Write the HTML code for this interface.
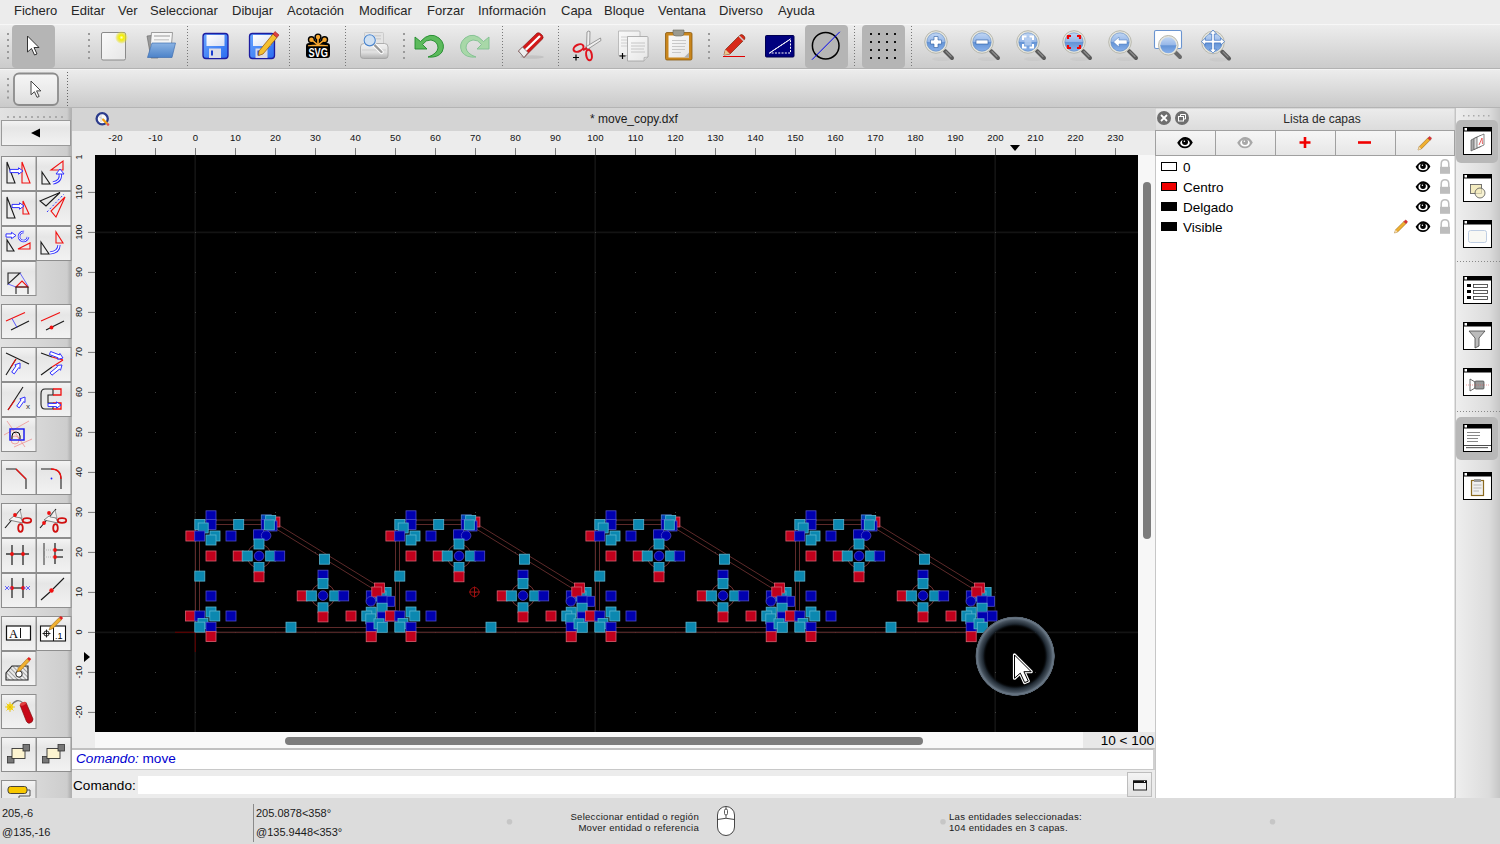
<!DOCTYPE html>
<html><head><meta charset="utf-8">
<style>
*{box-sizing:border-box;margin:0;padding:0}
html,body{width:1500px;height:844px;overflow:hidden;background:#ececec;font-family:"Liberation Sans",sans-serif;color:#000}
.a{position:absolute}
svg{display:block}
#menubar{left:0;top:0;width:1500px;height:24px;background:#ececec}
#menubar span{position:absolute;top:3px;font-size:13px;color:#262626;white-space:nowrap}
#tb1{left:0;top:24px;width:1500px;height:45px;background:linear-gradient(#ededed,#cbcbcb);border-top:1px solid #f7f7f7;border-bottom:1px solid #b2b2b2}
#tb2{left:0;top:69px;width:1500px;height:39px;background:linear-gradient(#ececec,#cacaca);border-top:1px solid #f4f4f4;border-bottom:1px solid #b4b4b4}
#left{left:0;top:108px;width:72px;height:690px;background:linear-gradient(90deg,#e2e2e2 0,#d8d8d8 36px,#cdcdcd 67px,#b6b6b6 70px,#b0b0b0 72px)}
#tabbar{left:72px;top:108px;width:1083px;height:23px;background:#d4d4d4}
#title{position:absolute;left:518px;top:4px;font-size:12px;color:#1a1a1a}
#hruler{left:72px;top:131px;width:1083px;height:24px;background:#ececec}
.rl{position:absolute;top:1px;width:40px;text-align:center;font-size:9.6px;letter-spacing:0.15px;color:#111}
#vruler{left:72px;top:155px;width:23px;height:577px;background:#ececec;overflow:hidden}
.vl{position:absolute;left:-13.5px;width:40px;height:12px;margin-top:-6px;text-align:center;font-size:9px;line-height:12px;color:#111;transform:rotate(-90deg)}
#canvas{left:95px;top:155px;width:1043px;height:577px;background:#000;overflow:hidden}
#vscroll{left:1138px;top:155px;width:17px;height:577px;background:#f7f7f7}
#vthumb{left:5px;top:27px;width:8px;height:357px;border-radius:4px;background:#7c7c7c}
#hscroll{left:95px;top:732px;width:988px;height:16px;background:#f8f8f8}
#hthumb{left:190px;top:5px;width:638px;height:8px;border-radius:4px;background:#7c7c7c}
#zoomlbl{left:1083px;top:732px;width:72px;height:16px;background:#e8e8e8;font-size:13.6px;text-align:right;padding-right:1px;line-height:17px}
#corner{left:72px;top:732px;width:23px;height:16px;background:#ececec}
#hist{left:72px;top:748px;width:1083px;height:22px;background:#fff;border-top:2px solid #c0c0c0;border-bottom:1px solid #c8c8c8;border-right:2px solid #d0d0d0;font-size:13.6px;color:#0000d0;padding-left:4px;line-height:18px}
#hist span{font-style:italic}
#cmdrow{left:72px;top:770px;width:1083px;height:28px;background:#ececec}
#cmdlbl{position:absolute;left:1px;top:7.5px;font-size:13.6px}
#cmdin{left:66px;top:6px;width:990px;height:18px;background:#fff}
#cmdbtn{left:1055px;top:2px;width:25px;height:25px;border:1px solid #bdbdbd;background:linear-gradient(#f4f4f4,#e0e0e0)}
#status{left:0;top:0;width:1500px;height:844px;background:transparent;pointer-events:none}
#statusbg{left:0;top:798px;width:1500px;height:46px;background:#dcdcdc}
#layers{left:1155px;top:108px;width:300px;height:690px;background:#fff;border-left:2px solid #c8c8c8}
#dock{left:1455px;top:108px;width:45px;height:690px;background:linear-gradient(90deg,#eeeeee,#dcdcdc 75%,#c6c6c6);border-left:1px solid #c4c4c4}
.st{position:absolute;font-size:11px;color:#1a1a1a;white-space:nowrap}
.st2{position:absolute;font-size:9.6px;letter-spacing:0.25px;color:#1a1a1a;white-space:nowrap}

</style></head><body>
<div id="menubar" class="a"><span style="left:14px">Fichero</span><span style="left:71px">Editar</span><span style="left:118px">Ver</span><span style="left:150px">Seleccionar</span><span style="left:232px">Dibujar</span><span style="left:287px">Acotación</span><span style="left:359px">Modificar</span><span style="left:427px">Forzar</span><span style="left:478px">Información</span><span style="left:561px">Capa</span><span style="left:604px">Bloque</span><span style="left:658px">Ventana</span><span style="left:719px">Diverso</span><span style="left:778px">Ayuda</span></div>
<div id="tb1" class="a"><svg width="1500" height="46" viewBox="0 23 1500 46" style="position:absolute;left:0;top:-2px"><defs>
<linearGradient id="lensg" x1="0" y1="0" x2="0" y2="1"><stop offset="0" stop-color="#c0d6f4"/><stop offset="0.47" stop-color="#98b8e8"/><stop offset="0.53" stop-color="#6494d6"/><stop offset="1" stop-color="#88b0ea"/></linearGradient>
<linearGradient id="flopg" x1="0" y1="0" x2="1" y2="1"><stop offset="0" stop-color="#6aa6ff"/><stop offset="1" stop-color="#2a6cf0"/></linearGradient>
<linearGradient id="labg" x1="0" y1="0" x2="1" y2="1"><stop offset="0" stop-color="#fff"/><stop offset="1" stop-color="#d8e0f4"/></linearGradient>
<linearGradient id="paperg" x1="0" y1="0" x2="1" y2="1"><stop offset="0" stop-color="#fafafa"/><stop offset="1" stop-color="#e6e6e6"/></linearGradient>
<linearGradient id="foldg" x1="0" y1="0" x2="0" y2="1"><stop offset="0" stop-color="#8cb4e4"/><stop offset="1" stop-color="#4c82c8"/></linearGradient>
<linearGradient id="btng" x1="0" y1="0" x2="0" y2="1"><stop offset="0" stop-color="#f6f6f6"/><stop offset="0.5" stop-color="#ececec"/><stop offset="1" stop-color="#dedede"/></linearGradient>
<radialGradient id="glow"><stop offset="0" stop-color="#ffffc0"/><stop offset="0.35" stop-color="#f4f000"/><stop offset="0.7" stop-color="#e8e020" stop-opacity="0.6"/><stop offset="1" stop-color="#e8e020" stop-opacity="0"/></radialGradient>
</defs><rect x="7" y="33" width="2" height="2" fill="#9a9a9a"/><rect x="7" y="39" width="2" height="2" fill="#9a9a9a"/><rect x="7" y="45" width="2" height="2" fill="#9a9a9a"/><rect x="7" y="51" width="2" height="2" fill="#9a9a9a"/><rect x="7" y="57" width="2" height="2" fill="#9a9a9a"/><rect x="12" y="25" width="43" height="43" rx="4" fill="#b5b5b5"/><path d="M0,0 L0,16 L4,12.5 L7,19 L9.5,18 L6.5,11.5 L11.5,11.5 Z" transform="translate(27.5,36) scale(1.0)" fill="#fff" stroke="#333" stroke-width="1.0" stroke-linejoin="round"/><rect x="88" y="33" width="2" height="2" fill="#9a9a9a"/><rect x="88" y="39" width="2" height="2" fill="#9a9a9a"/><rect x="88" y="45" width="2" height="2" fill="#9a9a9a"/><rect x="88" y="51" width="2" height="2" fill="#9a9a9a"/><rect x="88" y="57" width="2" height="2" fill="#9a9a9a"/><rect x="101.5" y="32.5" width="24" height="27.5" rx="1.5" fill="url(#paperg)" stroke="#8a8a8a" stroke-width="1"/><circle cx="121.5" cy="37.5" r="6.5" fill="url(#glow)"/><path d="M147,36 L156,35 L158,58 L151,58 Z" fill="#9a9a9a" stroke="#6e6e6e" stroke-width="0.7"/><path d="M151.5,32.5 L172.5,32.5 L171,50 L150,50 Z" fill="#f6f6f6" stroke="#7a7a7a" stroke-width="0.7"/><rect x="154" y="35" width="16" height="2" fill="#c8c8c8"/><rect x="154" y="39" width="15" height="1.5" fill="#cfcfcf"/><path d="M152,43 L175.5,43 L172,57.5 L147.5,57.5 Z" fill="url(#foldg)" stroke="#4070b0" stroke-width="0.7"/><line x1="187.5" y1="26" x2="187.5" y2="67" stroke="#777" stroke-width="1" stroke-dasharray="1 2"/><rect x="203" y="33.5" width="25" height="25" rx="3" fill="url(#flopg)" stroke="#1c1ca0" stroke-width="1.3"/><rect x="206.5" y="35.0" width="18" height="11" fill="url(#labg)"/><rect x="209" y="48.5" width="12" height="9.5" fill="#dcdce6"/><rect x="211" y="50.5" width="2" height="5" fill="#1a3cd0"/><rect x="249.5" y="33.5" width="25" height="25" rx="3" fill="url(#flopg)" stroke="#1c1ca0" stroke-width="1.3"/><rect x="253.0" y="35.0" width="18" height="11" fill="url(#labg)"/><rect x="255.5" y="48.5" width="12" height="9.5" fill="#dcdce6"/><rect x="257.5" y="50.5" width="2" height="5" fill="#1a3cd0"/><path d="M259,51 L273,34 L277,37.5 L263,54 L258.5,55.5 Z" fill="#f4c030" stroke="#a06010" stroke-width="0.8"/><path d="M273,34 L275,31.5 L279,35 L277,37.5 Z" fill="#e04040" stroke="#a02020" stroke-width="0.6"/><line x1="289.5" y1="26" x2="289.5" y2="67" stroke="#777" stroke-width="1" stroke-dasharray="1 2"/><g stroke="#000" stroke-width="4.2" stroke-linecap="round"><line x1="318" y1="45" x2="318" y2="37"/><line x1="318" y1="45" x2="311.4" y2="39.7"/><line x1="318" y1="45" x2="324.6" y2="39.7"/></g><g fill="#000"><circle cx="318" cy="37" r="3.6"/><circle cx="311.4" cy="39.7" r="3.6"/><circle cx="324.6" cy="39.7" r="3.6"/></g><rect x="306" y="43" width="24" height="15" rx="3.2" fill="#000"/><g stroke="#f8a830" stroke-width="1.6" stroke-linecap="round"><line x1="318" y1="45" x2="318" y2="37.5"/><line x1="318" y1="45" x2="312" y2="40.2"/><line x1="318" y1="45" x2="324" y2="40.2"/></g><g fill="#f8a830"><circle cx="318" cy="37" r="2.2"/><circle cx="311.4" cy="39.7" r="2.2"/><circle cx="324.6" cy="39.7" r="2.2"/></g><path d="M308,45.3 Q318,43.5 328,45.3 L328,46.3 L308,46.3 Z" fill="#f8a830"/><text x="0" y="0" transform="translate(318.2,56.5) scale(0.74,1)" font-family="Liberation Sans" font-weight="bold" font-size="12.5" fill="#fff" text-anchor="middle">SVG</text><line x1="345.5" y1="26" x2="345.5" y2="67" stroke="#777" stroke-width="1" stroke-dasharray="1 2"/><defs><linearGradient id="prg" x1="0" y1="0" x2="0" y2="1"><stop offset="0" stop-color="#f2f2f2"/><stop offset="0.6" stop-color="#dedede"/><stop offset="1" stop-color="#b0b0b0"/></linearGradient></defs><rect x="364.5" y="32.5" width="19" height="13" rx="1" fill="#e4e4e4" stroke="#c4c4c4" stroke-width="0.8"/><rect x="367" y="35" width="14" height="1.5" fill="#d0d0d0"/><rect x="367" y="38" width="14" height="1.5" fill="#d0d0d0"/><path d="M360.5,47 Q360.5,43.5 364,43.5 L384.5,43.5 Q388,43.5 388,47 L388,56 Q388,58.5 385,58.5 L363.5,58.5 Q360.5,58.5 360.5,56 Z" fill="url(#prg)" stroke="#a0a0a0" stroke-width="0.8"/><path d="M362,50 H386" stroke="#c8c8c8" stroke-width="0.8"/><line x1="374.5" y1="45" x2="381.5" y2="52" stroke="#fff" stroke-width="4.2" stroke-linecap="round"/><line x1="374.5" y1="45" x2="381.5" y2="52" stroke="#9a9a9a" stroke-width="2.4" stroke-linecap="round"/><circle cx="369.7" cy="40.3" r="6.6" fill="#f4f4f4"/><circle cx="369.7" cy="40.3" r="5.6" fill="#cfe0f2" stroke="#4a84cc" stroke-width="1.1"/><rect x="403" y="33" width="2" height="2" fill="#9a9a9a"/><rect x="403" y="39" width="2" height="2" fill="#9a9a9a"/><rect x="403" y="45" width="2" height="2" fill="#9a9a9a"/><rect x="403" y="51" width="2" height="2" fill="#9a9a9a"/><rect x="403" y="57" width="2" height="2" fill="#9a9a9a"/><path d="M415,37 L415,49 L427,49 L422.5,44.5 Q426,39.5 431,40 Q438,41.5 438,48 Q437,54 428,57 Q438,58 442,52 Q446,44 439,38 Q430,31 420.5,41.5 Z" fill="#5cba5c" stroke="#1f8a2a" stroke-width="0.9"/><path d="M489,37 L489,49 L477,49 L481.5,44.5 Q478,39.5 473,40 Q466,41.5 466,48 Q467,54 476,57 Q466,58 462,52 Q458,44 465,38 Q474,31 483.5,41.5 Z" fill="#a8d8a8" stroke="#80c090" stroke-width="0.9"/><line x1="502.5" y1="26" x2="502.5" y2="67" stroke="#777" stroke-width="1" stroke-dasharray="1 2"/><ellipse cx="532" cy="57" rx="12" ry="1.8" fill="#000" opacity="0.08"/><path d="M518.5,51 L537,33 Q539,32 541,34 L542.5,35.5 Q544,37.5 542,39.5 L524,57.5 Z" fill="#d41818" stroke="#7a1010" stroke-width="0.6"/><path d="M521.5,54 L540,36" stroke="#fff" stroke-width="2.3"/><path d="M518.5,51 L522.5,47 L528,52.5 L524,57.5 Z" fill="#eee" stroke="#666" stroke-width="0.7"/><line x1="558.5" y1="26" x2="558.5" y2="67" stroke="#777" stroke-width="1" stroke-dasharray="1 2"/><path d="M586.5,50 L587,32 Q588,30.5 590,31.5 L589.5,50 Z" fill="#f0f0f0" stroke="#777" stroke-width="0.7"/><path d="M585.5,47 L600.5,38 L601,40.5 L588,49 Z" fill="#f0f0f0" stroke="#777" stroke-width="0.7"/><ellipse cx="578.5" cy="48" rx="5.3" ry="3.3" transform="rotate(-25 578.5 48)" fill="none" stroke="#e0141e" stroke-width="2"/><ellipse cx="589" cy="55" rx="2.8" ry="5.3" transform="rotate(-10 589 55)" fill="none" stroke="#e0141e" stroke-width="2"/><path d="M583,50 L587,48" stroke="#e0141e" stroke-width="2"/><path d="M576,54.5 V60.5 M573,57.5 H579" stroke="#000" stroke-width="1.2"/><path d="M618.5,31 H639 Q640,31 640,32 V55.5 H618.5 Z" fill="url(#paperg)" stroke="#b0b0b0" stroke-width="0.8"/><g stroke="#d0d0d0" stroke-width="1"><line x1="621" y1="37" x2="630" y2="37"/><line x1="621" y1="40" x2="630" y2="40"/><line x1="621" y1="43" x2="630" y2="43"/><line x1="621" y1="46" x2="630" y2="46"/></g><path d="M627.5,36.5 H647 Q648,36.5 648,37.5 V57 L644,61 H627.5 Z" fill="url(#paperg)" stroke="#a0a0a0" stroke-width="0.8"/><path d="M644,61 L644,57.5 L648,57" fill="#d8d8d8" stroke="#a0a0a0" stroke-width="0.6"/><g stroke="#c6c6c6" stroke-width="1"><line x1="631" y1="43" x2="645" y2="43"/><line x1="631" y1="46" x2="645" y2="46"/><line x1="631" y1="49" x2="644" y2="49"/><line x1="631" y1="52" x2="645" y2="52"/></g><path d="M622.5,53 V59 M619.5,56 H625.5" stroke="#000" stroke-width="1.2"/><rect x="665.5" y="32.5" width="26.5" height="27.5" rx="1.5" fill="#c8851c" stroke="#8a5a10" stroke-width="0.8"/><rect x="668.5" y="35.5" width="20.5" height="22" fill="url(#paperg)"/><path d="M684,57.5 L689,52.5 L689,57.5 Z" fill="#b0b0b0"/><path d="M673,30 H684 V33 Q684,36 681,36 H676 Q673,36 673,33 Z" fill="#9a9a90" stroke="#6a6a60" stroke-width="0.6"/><g stroke="#c8c8c8" stroke-width="1"><line x1="672" y1="40.5" x2="686" y2="40.5"/><line x1="672" y1="43.5" x2="686" y2="43.5"/><line x1="672" y1="46.5" x2="685" y2="46.5"/><line x1="672" y1="49.5" x2="685" y2="49.5"/><line x1="672" y1="52.5" x2="681" y2="52.5"/></g><rect x="708" y="33" width="2" height="2" fill="#9a9a9a"/><rect x="708" y="39" width="2" height="2" fill="#9a9a9a"/><rect x="708" y="45" width="2" height="2" fill="#9a9a9a"/><rect x="708" y="51" width="2" height="2" fill="#9a9a9a"/><rect x="708" y="57" width="2" height="2" fill="#9a9a9a"/><path d="M724,55 L725.5,49.5 L739.5,35.5 Q741.5,33.5 743.5,35.5 L744,36 Q746,38 744,40 L730,54 Z" fill="#d82a1a" stroke="#7a2a10" stroke-width="0.7"/><path d="M724,55 L725.5,49.5 L730,54 Z" fill="#e8c890"/><path d="M739,36 L744,41" stroke="#ccc" stroke-width="1.5"/><line x1="723" y1="56.5" x2="745" y2="56.5" stroke="#e00000" stroke-width="1"/><rect x="765.5" y="35.5" width="28.5" height="21.5" rx="1" fill="#00007e" stroke="#000050" stroke-width="1"/><path d="M769.5,53 L790.5,39 L790.5,53 Z" fill="none" stroke="#fff" stroke-width="1" stroke-dasharray="2 1.3"/><line x1="769.5" y1="53" x2="790.5" y2="39" stroke="#fff" stroke-width="1"/><rect x="805" y="25" width="43" height="43" rx="4" fill="#b5b5b5"/><circle cx="825.7" cy="45.7" r="13.3" fill="none" stroke="#000" stroke-width="1.5"/><line x1="812" y1="59.7" x2="839.8" y2="31.8" stroke="#0000f0" stroke-width="1"/><line x1="854.5" y1="26" x2="854.5" y2="67" stroke="#777" stroke-width="1" stroke-dasharray="1 2"/><rect x="862" y="25" width="43" height="43" rx="4" fill="#b5b5b5"/><rect x="870" y="33" width="2" height="2" fill="#111"/><rect x="870" y="41" width="2" height="2" fill="#111"/><rect x="870" y="49" width="2" height="2" fill="#111"/><rect x="870" y="57" width="2" height="2" fill="#111"/><rect x="878" y="33" width="2" height="2" fill="#111"/><rect x="878" y="41" width="2" height="2" fill="#111"/><rect x="878" y="49" width="2" height="2" fill="#111"/><rect x="878" y="57" width="2" height="2" fill="#111"/><rect x="886" y="33" width="2" height="2" fill="#111"/><rect x="886" y="41" width="2" height="2" fill="#111"/><rect x="886" y="49" width="2" height="2" fill="#111"/><rect x="886" y="57" width="2" height="2" fill="#111"/><rect x="894" y="33" width="2" height="2" fill="#111"/><rect x="894" y="41" width="2" height="2" fill="#111"/><rect x="894" y="49" width="2" height="2" fill="#111"/><rect x="894" y="57" width="2" height="2" fill="#111"/><line x1="911.5" y1="26" x2="911.5" y2="67" stroke="#777" stroke-width="1" stroke-dasharray="1 2"/><ellipse cx="942" cy="59" rx="10" ry="2" fill="#000" opacity="0.03"/><path d="M945,51 L952,58" stroke="#5a5a5a" stroke-width="4" stroke-linecap="round"/><path d="M946,51.5 L951,56.5" stroke="#8a8a8a" stroke-width="1.2" stroke-linecap="round"/><circle cx="936" cy="42" r="11.3" fill="#e6e6de" stroke="#b8b8ae" stroke-width="1"/><circle cx="936" cy="42" r="9.2" fill="url(#lensg)" stroke="#5a86c0" stroke-width="0.6"/><path d="M934,36.5 h4 v3.5 h3.5 v4 h-3.5 v3.5 h-4 v-3.5 h-3.5 v-4 h3.5 z" fill="#fff" stroke="#2a5aa0" stroke-width="0.6"/><ellipse cx="988" cy="59" rx="10" ry="2" fill="#000" opacity="0.03"/><path d="M991,51 L998,58" stroke="#5a5a5a" stroke-width="4" stroke-linecap="round"/><path d="M992,51.5 L997,56.5" stroke="#8a8a8a" stroke-width="1.2" stroke-linecap="round"/><circle cx="982" cy="42" r="11.3" fill="#e6e6de" stroke="#b8b8ae" stroke-width="1"/><circle cx="982" cy="42" r="9.2" fill="url(#lensg)" stroke="#5a86c0" stroke-width="0.6"/><rect x="976" y="40" width="12" height="4" fill="#fff" stroke="#2a5aa0" stroke-width="0.6"/><ellipse cx="1034" cy="59" rx="10" ry="2" fill="#000" opacity="0.03"/><path d="M1037,51 L1044,58" stroke="#5a5a5a" stroke-width="4" stroke-linecap="round"/><path d="M1038,51.5 L1043,56.5" stroke="#8a8a8a" stroke-width="1.2" stroke-linecap="round"/><circle cx="1028" cy="42" r="11.3" fill="#e6e6de" stroke="#b8b8ae" stroke-width="1"/><circle cx="1028" cy="42" r="9.2" fill="url(#lensg)" stroke="#5a86c0" stroke-width="0.6"/><rect x="1024.5" y="38" width="7" height="7.5" fill="#b8d0f0" opacity="0.8"/><path d="M1023,40 v-3.5 h3.5 M1029.5,36.5 h3.5 v3.5 M1033,44 v3.5 h-3.5 M1026.5,47.5 h-3.5 v-3.5" fill="none" stroke="#fff" stroke-width="2"/><ellipse cx="1080" cy="59" rx="10" ry="2" fill="#000" opacity="0.03"/><path d="M1083,51 L1090,58" stroke="#5a5a5a" stroke-width="4" stroke-linecap="round"/><path d="M1084,51.5 L1089,56.5" stroke="#8a8a8a" stroke-width="1.2" stroke-linecap="round"/><circle cx="1074" cy="42" r="11.3" fill="#e6e6de" stroke="#b8b8ae" stroke-width="1"/><circle cx="1074" cy="42" r="9.2" fill="url(#lensg)" stroke="#5a86c0" stroke-width="0.6"/><path d="M1068,39 v-3 h3 M1077,36 h3 v3 M1080,45 v3 h-3 M1071,48 h-3 v-3" fill="none" stroke="#f00000" stroke-width="2.2"/><ellipse cx="1126" cy="59" rx="10" ry="2" fill="#000" opacity="0.03"/><path d="M1129,51 L1136,58" stroke="#5a5a5a" stroke-width="4" stroke-linecap="round"/><path d="M1130,51.5 L1135,56.5" stroke="#8a8a8a" stroke-width="1.2" stroke-linecap="round"/><circle cx="1120" cy="42" r="11.3" fill="#e6e6de" stroke="#b8b8ae" stroke-width="1"/><circle cx="1120" cy="42" r="9.2" fill="url(#lensg)" stroke="#5a86c0" stroke-width="0.6"/><path d="M1113.5,42 L1119,37 V40 H1127 V44 H1119 V47 Z" fill="#fff" stroke="#4a78b8" stroke-width="0.5"/><rect x="1154.5" y="30.5" width="27" height="18" rx="1.5" fill="#fff" stroke="#6a94d0" stroke-width="1.1"/><line x1="1174" y1="51" x2="1180" y2="57" stroke="#6a6a6a" stroke-width="4" stroke-linecap="round"/><circle cx="1168.3" cy="45.3" r="9.8" fill="#e6e6de" stroke="#b8b8ae" stroke-width="1"/><circle cx="1168.3" cy="45.3" r="8" fill="url(#lensg)"/><ellipse cx="1219" cy="59.5" rx="10" ry="2" fill="#000" opacity="0.03"/><path d="M1222,51.5 L1229,58.5" stroke="#5a5a5a" stroke-width="4" stroke-linecap="round"/><path d="M1223,52.0 L1228,57.0" stroke="#8a8a8a" stroke-width="1.2" stroke-linecap="round"/><circle cx="1213" cy="42.5" r="11.3" fill="#e6e6de" stroke="#b8b8ae" stroke-width="1"/><circle cx="1213" cy="42.5" r="9.2" fill="url(#lensg)" stroke="#5a86c0" stroke-width="0.6"/><path d="M1213,30 l-3.5,4 h2.2 v6.3 h-6.3 v-2.2 l-4,3.5 l4,3.5 v-2.2 h6.3 v6.3 h-2.2 l3.5,4 l3.5,-4 h-2.2 v-6.3 h6.3 v2.2 l4,-3.5 l-4,-3.5 v2.2 h-6.3 v-6.3 h2.2 z" fill="#fff" stroke="#3a70c0" stroke-width="0.7"/></svg></div>
<div id="tb2" class="a"><svg width="1500" height="39" viewBox="0 69 1500 39" style="position:absolute;left:0;top:0"><rect x="7" y="77.0" width="2" height="2" fill="#9a9a9a"/><rect x="7" y="83.2" width="2" height="2" fill="#9a9a9a"/><rect x="7" y="89.4" width="2" height="2" fill="#9a9a9a"/><rect x="7" y="95.6" width="2" height="2" fill="#9a9a9a"/><rect x="14" y="72.5" width="44" height="31.5" rx="5" fill="url(#btng)" stroke="#8c8c8c" stroke-width="1.8"/><path d="M0,0 L0,16 L4,12.5 L7,19 L9.5,18 L6.5,11.5 L11.5,11.5 Z" transform="translate(31,80) scale(0.86)" fill="#fff" stroke="#444" stroke-width="1.1627906976744187" stroke-linejoin="round"/><line x1="67.5" y1="71" x2="67.5" y2="106" stroke="#666" stroke-width="1" stroke-dasharray="1 2"/></svg></div>
<div id="left" class="a"><svg width="72" height="690" viewBox="0 108 72 690" style="position:absolute;left:0;top:0"><defs><linearGradient id="lbtn" x1="0" y1="0" x2="0" y2="1"><stop offset="0" stop-color="#f4f4f4"/><stop offset="0.3" stop-color="#e6e6e6"/><stop offset="1" stop-color="#f2f2f2"/></linearGradient></defs><rect x="7" y="116" width="2" height="2" fill="#aaa"/><rect x="13" y="116" width="2" height="2" fill="#aaa"/><rect x="19" y="116" width="2" height="2" fill="#aaa"/><rect x="25" y="116" width="2" height="2" fill="#aaa"/><rect x="31" y="116" width="2" height="2" fill="#aaa"/><rect x="37" y="116" width="2" height="2" fill="#aaa"/><rect x="43" y="116" width="2" height="2" fill="#aaa"/><rect x="49" y="116" width="2" height="2" fill="#aaa"/><rect x="55" y="116" width="2" height="2" fill="#aaa"/><rect x="61" y="116" width="2" height="2" fill="#aaa"/><rect x="1.5" y="120.5" width="69" height="25" fill="url(#lbtn)" stroke="#9a9a9a" stroke-width="1"/><path d="M31,133 L40,128.5 V137.5 Z" fill="#000"/><g transform="translate(1,156)"><rect x="0.5" y="0.5" width="34.5" height="34" fill="url(#lbtn)" stroke="#8e8e8e" stroke-width="1"/><path d="M6,6 L6,27 L14,27 Z" fill="none" stroke="#1a1a1a" stroke-width="1.1" stroke-linejoin="miter"/><path d="M21,6 L21,27 L29,27 Z" fill="none" stroke="#f01010" stroke-width="1.1" stroke-linejoin="miter"/><path d="M9.0,16.6 L17.5,16.6 L17.5,18.2 L22.0,15.0 L17.5,11.8 L17.5,13.4 L9.0,13.4 Z" fill="#fff" stroke="#3030ff" stroke-width="1"/></g><g transform="translate(36,156)"><rect x="0.5" y="0.5" width="34.5" height="34" fill="url(#lbtn)" stroke="#8e8e8e" stroke-width="1"/><path d="M6,16 L6,28 L14,28 Z" fill="none" stroke="#1a1a1a" stroke-width="1.1" stroke-linejoin="miter"/><path d="M15,14 L27,5 L27,14 Z" fill="none" stroke="#f01010" stroke-width="1.1" stroke-linejoin="miter"/><path d="M17,27 Q26,25 24,17" fill="none" stroke="#3030ff" stroke-width="3.2"/><path d="M17,27 Q26,25 24,17" fill="none" stroke="#fff" stroke-width="1.3"/><path d="M20,18 L24,13 L28,18 Z" fill="#fff" stroke="#3030ff" stroke-width="1"/></g><g transform="translate(1,191)"><rect x="0.5" y="0.5" width="34.5" height="34" fill="url(#lbtn)" stroke="#8e8e8e" stroke-width="1"/><path d="M6,6 L6,27 L14,27 Z" fill="none" stroke="#1a1a1a" stroke-width="1.1" stroke-linejoin="miter"/><path d="M22,10 L22,23 L28,23 Z" fill="none" stroke="#f01010" stroke-width="1.1" stroke-linejoin="miter"/><path d="M11.0,16.6 L18.5,16.6 L18.5,18.2 L23.0,15.0 L18.5,11.8 L18.5,13.4 L11.0,13.4 Z" fill="#fff" stroke="#3030ff" stroke-width="1"/></g><g transform="translate(36,191)"><rect x="0.5" y="0.5" width="34.5" height="34" fill="url(#lbtn)" stroke="#8e8e8e" stroke-width="1"/><path d="M4,10 L24,1.5 L10,15 Z" fill="none" stroke="#1a1a1a" stroke-width="1.1" stroke-linejoin="miter"/><path d="M29,6 L15,20 L20,26 Z" fill="none" stroke="#f01010" stroke-width="1.1" stroke-linejoin="miter"/><line x1="11" y1="21" x2="28" y2="3" stroke="#3030ff" stroke-width="1" stroke-dasharray="2 2"/></g><g transform="translate(1,226)"><rect x="0.5" y="0.5" width="34.5" height="34" fill="url(#lbtn)" stroke="#8e8e8e" stroke-width="1"/><path d="M5.0,11.1 L10.5,11.1 L10.5,12.7 L15.0,9.5 L10.5,6.3 L10.5,7.9 L5.0,7.9 Z" fill="#fff" stroke="#3030ff" stroke-width="1"/><path d="M23,6 A4.5,4.5 0 1 0 27,11" fill="none" stroke="#3030ff" stroke-width="2.6"/><path d="M23,6 A4.5,4.5 0 1 0 27,11" fill="none" stroke="#fff" stroke-width="1"/><path d="M6,14 L6,25 L13,25 Z" fill="none" stroke="#1a1a1a" stroke-width="1.1" stroke-linejoin="miter"/><path d="M17,23 L29,17 L29,23 Z" fill="none" stroke="#f01010" stroke-width="1.1" stroke-linejoin="miter"/></g><g transform="translate(36,226)"><rect x="0.5" y="0.5" width="34.5" height="34" fill="url(#lbtn)" stroke="#8e8e8e" stroke-width="1"/><path d="M5,16 L5,28 L13,28 Z" fill="none" stroke="#1a1a1a" stroke-width="1.1" stroke-linejoin="miter"/><path d="M20,6 L20,17 L27,17 Z" fill="none" stroke="#f01010" stroke-width="1.1" stroke-linejoin="miter"/><path d="M14,27 Q23,26 23,19" fill="none" stroke="#3030ff" stroke-width="3.2"/><path d="M14,27 Q23,26 23,19" fill="none" stroke="#fff" stroke-width="1.3"/></g><g transform="translate(1,261)"><rect x="0.5" y="0.5" width="34.5" height="34" fill="url(#lbtn)" stroke="#8e8e8e" stroke-width="1"/><path d="M7,23 V12 H19 Z" fill="none" stroke="#222" stroke-width="1.1"/><line x1="19" y1="12" x2="27" y2="25" stroke="#3030ff" stroke-width="0.7" /><line x1="7" y1="23" x2="15" y2="26" stroke="#3030ff" stroke-width="0.7" /><path d="M15,26 L21,20 L27,26 Z" fill="none" stroke="#f01010" stroke-width="1.1" stroke-linejoin="miter"/><path d="M15,33 V26 H27 V33" fill="none" stroke="#222" stroke-width="1.1"/></g><g transform="translate(1,304)"><rect x="0.5" y="0.5" width="34.5" height="34" fill="url(#lbtn)" stroke="#8e8e8e" stroke-width="1"/><line x1="5" y1="17" x2="24" y2="8.5" stroke="#f01010" stroke-width="1.1" /><line x1="10" y1="26" x2="28" y2="17" stroke="#1a1a1a" stroke-width="1.1" /><line x1="11" y1="14.5" x2="16" y2="23.5" stroke="#3030ff" stroke-width="0.8" /></g><g transform="translate(36,304)"><rect x="0.5" y="0.5" width="34.5" height="34" fill="url(#lbtn)" stroke="#8e8e8e" stroke-width="1"/><line x1="5" y1="17" x2="24" y2="8.5" stroke="#f01010" stroke-width="1.1" /><line x1="10" y1="26" x2="28" y2="17" stroke="#1a1a1a" stroke-width="1.1" /><circle cx="15.5" cy="23.5" r="1.9" fill="#f01010"/></g><g transform="translate(1,347)"><rect x="0.5" y="0.5" width="34.5" height="34" fill="url(#lbtn)" stroke="#8e8e8e" stroke-width="1"/><line x1="5" y1="6" x2="28" y2="17" stroke="#1a1a1a" stroke-width="1.1" /><line x1="5" y1="28" x2="15" y2="12" stroke="#1a1a1a" stroke-width="1.1" /><line x1="10" y1="20" x2="15" y2="12" stroke="#f01010" stroke-width="1.1" /><path d="M13.3,26.9 L17.7,20.6 L19.0,21.5 L19.0,16.0 L13.8,17.9 L15.1,18.8 L10.7,25.1 Z" fill="#fff" stroke="#3030ff" stroke-width="1"/></g><g transform="translate(36,347)"><rect x="0.5" y="0.5" width="34.5" height="34" fill="url(#lbtn)" stroke="#8e8e8e" stroke-width="1"/><line x1="5" y1="6" x2="16" y2="10" stroke="#1a1a1a" stroke-width="1.1" /><line x1="16" y1="10" x2="27" y2="13" stroke="#f01010" stroke-width="1.1" /><line x1="27" y1="13" x2="16" y2="20" stroke="#f01010" stroke-width="1.1" /><line x1="16" y1="20" x2="5" y2="28" stroke="#1a1a1a" stroke-width="1.1" /><path d="M13.4,7.5 L22.2,10.9 L21.7,12.4 L27.0,11.0 L23.9,6.4 L23.4,7.9 L14.6,4.5 Z" fill="#fff" stroke="#3030ff" stroke-width="1"/><path d="M16.0,28.2 L23.5,22.1 L24.5,23.3 L26.0,18.0 L20.5,18.4 L21.5,19.6 L14.0,25.8 Z" fill="#fff" stroke="#3030ff" stroke-width="1"/></g><g transform="translate(1,382)"><rect x="0.5" y="0.5" width="34.5" height="34" fill="url(#lbtn)" stroke="#8e8e8e" stroke-width="1"/><line x1="7" y1="28" x2="22" y2="5" stroke="#1a1a1a" stroke-width="1.1" /><line x1="7" y1="28" x2="14" y2="18" stroke="#f01010" stroke-width="1.1" /><path d="M18.3,25.9 L22.7,19.6 L24.0,20.5 L24.0,15.0 L18.8,16.9 L20.1,17.8 L15.7,24.1 Z" fill="#fff" stroke="#3030ff" stroke-width="1"/><text x="25" y="27" font-size="8" font-family="Liberation Sans" fill="#333">x</text></g><g transform="translate(36,382)"><rect x="0.5" y="0.5" width="34.5" height="34" fill="url(#lbtn)" stroke="#8e8e8e" stroke-width="1"/><path d="M17,7 H9 Q5,7 5,12 V22 Q5,27 9,27 H17 V21 H12 V13 H17 Z" fill="none" stroke="#222" stroke-width="1.1"/><path d="M17,7 H25 V13 H17 M17,21 H25 V27 H17" fill="none" stroke="#f01010" stroke-width="1.3"/><path d="M12.0,24.6 L20.5,24.6 L20.5,26.2 L25.0,23.0 L20.5,19.8 L20.5,21.4 L12.0,21.4 Z" fill="#fff" stroke="#3030ff" stroke-width="1"/></g><g transform="translate(1,417)"><rect x="0.5" y="0.5" width="34.5" height="34" fill="url(#lbtn)" stroke="#8e8e8e" stroke-width="1"/><g stroke="#f09090" stroke-width="0.8"><line x1="3" y1="18" x2="28" y2="4"/><line x1="13" y1="30" x2="31" y2="22"/><line x1="6" y1="4" x2="24" y2="30"/><circle cx="14" cy="23" r="4" fill="none"/></g><rect x="9" y="12" width="14" height="11" fill="none" stroke="#1010f0" stroke-width="1.4"/><path d="M11,22 V19 Q11,15 15,15 Q19,15 19,19 V22" fill="none" stroke="#000" stroke-width="1"/></g><g transform="translate(1,460)"><rect x="0.5" y="0.5" width="34.5" height="34" fill="url(#lbtn)" stroke="#8e8e8e" stroke-width="1"/><path d="M5,9 H15 L25,19 V29" fill="none" stroke="#222" stroke-width="1.1"/><line x1="15" y1="9" x2="25" y2="19" stroke="#f01010" stroke-width="1.1" /></g><g transform="translate(36,460)"><rect x="0.5" y="0.5" width="34.5" height="34" fill="url(#lbtn)" stroke="#8e8e8e" stroke-width="1"/><path d="M5,9 H15 Q25,9 25,19 V29" fill="none" stroke="#222" stroke-width="1.1"/><path d="M15,9 Q25,9 25,19" fill="none" stroke="#f01010" stroke-width="1.3"/><circle cx="15.5" cy="18.5" r="0.9" fill="#2020ff"/></g><g transform="translate(1,503)"><rect x="0.5" y="0.5" width="34.5" height="34" fill="url(#lbtn)" stroke="#8e8e8e" stroke-width="1"/><line x1="4" y1="25" x2="20" y2="6" stroke="#1a1a1a" stroke-width="1.1" /><path d="M8,17 L22,20 L20,15 L13,13 Z" fill="#f4f4f4" stroke="#555" stroke-width="0.7"/><path d="M14,14 L19,7 L21,15 Z" fill="#eee" stroke="#666" stroke-width="0.6"/><ellipse cx="26" cy="17.5" rx="4.2" ry="2.3" fill="none" stroke="#d01010" stroke-width="1.8"/><ellipse cx="19.5" cy="25" rx="2.3" ry="3.8" fill="none" stroke="#d01010" stroke-width="1.8"/><circle cx="14" cy="12" r="1.9" fill="#f01010"/></g><g transform="translate(36,503)"><rect x="0.5" y="0.5" width="34.5" height="34" fill="url(#lbtn)" stroke="#8e8e8e" stroke-width="1"/><line x1="4" y1="25" x2="20" y2="6" stroke="#1a1a1a" stroke-width="1.1" /><path d="M8,17 L22,20 L20,15 L13,13 Z" fill="#f4f4f4" stroke="#555" stroke-width="0.7"/><path d="M14,14 L19,7 L21,15 Z" fill="#eee" stroke="#666" stroke-width="0.6"/><ellipse cx="26" cy="17.5" rx="4.2" ry="2.3" fill="none" stroke="#d01010" stroke-width="1.8"/><ellipse cx="19.5" cy="25" rx="2.3" ry="3.8" fill="none" stroke="#d01010" stroke-width="1.8"/><circle cx="13" cy="10" r="1.9" fill="#f01010"/><circle cx="8" cy="20" r="1.9" fill="#f01010"/></g><g transform="translate(1,538)"><rect x="0.5" y="0.5" width="34.5" height="34" fill="url(#lbtn)" stroke="#8e8e8e" stroke-width="1"/><line x1="11" y1="7" x2="11" y2="27" stroke="#1a1a1a" stroke-width="1.2" /><line x1="22" y1="7" x2="22" y2="27" stroke="#1a1a1a" stroke-width="1.2" /><line x1="5" y1="16" x2="28" y2="16" stroke="#1a1a1a" stroke-width="1.3" /><circle cx="11" cy="16" r="1.9" fill="#f01010"/><circle cx="22" cy="16" r="1.9" fill="#f01010"/></g><g transform="translate(36,538)"><rect x="0.5" y="0.5" width="34.5" height="34" fill="url(#lbtn)" stroke="#8e8e8e" stroke-width="1"/><line x1="8" y1="5" x2="8" y2="27" stroke="#1a1a1a" stroke-width="0.9" /><line x1="19" y1="5" x2="19" y2="26" stroke="#1a1a1a" stroke-width="1.2" /><line x1="8" y1="12" x2="19" y2="12" stroke="#aaa" stroke-width="0.8" stroke-dasharray="1 1"/><line x1="8" y1="19" x2="19" y2="19" stroke="#aaa" stroke-width="0.8" stroke-dasharray="1 1"/><line x1="19" y1="12" x2="27" y2="12" stroke="#1a1a1a" stroke-width="1.2" /><line x1="19" y1="19" x2="27" y2="19" stroke="#1a1a1a" stroke-width="1.2" /><circle cx="19" cy="12" r="1.9" fill="#f01010"/><circle cx="19" cy="19" r="1.9" fill="#f01010"/></g><g transform="translate(1,573)"><rect x="0.5" y="0.5" width="34.5" height="34" fill="url(#lbtn)" stroke="#8e8e8e" stroke-width="1"/><line x1="11" y1="5" x2="11" y2="25" stroke="#1a1a1a" stroke-width="1.2" /><line x1="22" y1="5" x2="22" y2="25" stroke="#1a1a1a" stroke-width="1.2" /><line x1="11" y1="15" x2="22" y2="15" stroke="#1a1a1a" stroke-width="1.2" /><circle cx="11" cy="15" r="1.9" fill="#f01010"/><circle cx="22" cy="15" r="1.9" fill="#f01010"/><path d="M4,13 L8,17 M4,17 L8,13 M25,13 L29,17 M25,17 L29,13" stroke="#4040ff" stroke-width="0.8"/><line x1="8" y1="15" x2="11" y2="15" stroke="#4040ff" stroke-width="0.7" /><line x1="22" y1="15" x2="25" y2="15" stroke="#4040ff" stroke-width="0.7" /></g><g transform="translate(36,573)"><rect x="0.5" y="0.5" width="34.5" height="34" fill="url(#lbtn)" stroke="#8e8e8e" stroke-width="1"/><line x1="5" y1="27" x2="14" y2="19" stroke="#1a1a1a" stroke-width="1.1" /><line x1="17" y1="16" x2="28" y2="5" stroke="#1a1a1a" stroke-width="1.1" /><circle cx="15.5" cy="17.5" r="2.2" fill="#f01010"/></g><g transform="translate(1,616)"><rect x="0.5" y="0.5" width="34.5" height="34" fill="url(#lbtn)" stroke="#8e8e8e" stroke-width="1"/><rect x="5.5" y="10" width="24" height="14" fill="#fff" stroke="#111" stroke-width="1.2"/><text x="8" y="22" font-family="Liberation Serif" font-size="12.5" fill="#000">A</text><line x1="19.5" y1="12" x2="19.5" y2="22" stroke="#111" stroke-width="1"/></g><g transform="translate(36,616)"><rect x="0.5" y="0.5" width="34.5" height="34" fill="url(#lbtn)" stroke="#8e8e8e" stroke-width="1"/><rect x="4.5" y="10" width="25" height="15" fill="#fff" stroke="#111" stroke-width="1.1"/><line x1="17.5" y1="10" x2="17.5" y2="25" stroke="#111" stroke-width="1"/><circle cx="10.5" cy="17.5" r="2.6" fill="none" stroke="#111" stroke-width="0.9"/><path d="M6.5,17.5 H14.5 M10.5,13.5 V21.5" stroke="#111" stroke-width="0.9"/><text x="19" y="23" font-family="Liberation Sans" font-size="9" fill="#000">.1</text><path d="M13.0,14.0 L16.6,12.7 L25.4,3.9 L23.1,1.6 L14.3,10.4 Z" fill="#f0b030" stroke="#8a5a10" stroke-width="0.5"/><path d="M25.4,3.9 L27.1,2.1 L24.9,-0.1 L23.1,1.6 Z" fill="#e02020"/></g><g transform="translate(1,651)"><rect x="0.5" y="0.5" width="34.5" height="34" fill="url(#lbtn)" stroke="#8e8e8e" stroke-width="1"/><defs><pattern id="hp" width="3" height="3" patternUnits="userSpaceOnUse" patternTransform="rotate(-45)"><line x1="0" y1="0" x2="0" y2="3" stroke="#333" stroke-width="0.8"/></pattern></defs><path d="M5,29 V22 L11,15 H27 V29 Z" fill="url(#hp)" stroke="#222" stroke-width="1.1"/><circle cx="18" cy="23" r="3.2" fill="#fff" stroke="#222" stroke-width="1"/><path d="M16.0,21.0 L19.6,19.5 L28.5,9.9 L26.1,7.7 L17.2,17.3 Z" fill="#f0b030" stroke="#8a5a10" stroke-width="0.5"/><path d="M28.5,9.9 L30.2,8.1 L27.8,5.9 L26.1,7.7 Z" fill="#e02020"/></g><g transform="translate(1,694)"><rect x="0.5" y="0.5" width="34.5" height="34" fill="url(#lbtn)" stroke="#8e8e8e" stroke-width="1"/><path d="M22,9 Q16,3 10,12" fill="none" stroke="#777" stroke-width="1.3"/><circle cx="9" cy="13" r="3.2" fill="#f8e030"/><g stroke="#e8c000" stroke-width="0.8"><path d="M4,13 H14 M9,8 V18 M5.5,9.5 L12.5,16.5 M12.5,9.5 L5.5,16.5"/></g><path d="M19,11 L25,8.5 L32,25 Q32,28 29,29 Q27,30 25.5,27.5 Z" fill="#c80818" stroke="#801010" stroke-width="0.7"/><ellipse cx="22" cy="9.8" rx="3.3" ry="1.6" transform="rotate(-22 22 9.8)" fill="#e04040"/></g><g transform="translate(1,737)"><rect x="0.5" y="0.5" width="34.5" height="34" fill="url(#lbtn)" stroke="#8e8e8e" stroke-width="1"/><rect x="6.5" y="19.5" width="6.5" height="6.5" fill="#777" stroke="#333" stroke-width="0.8"/><rect x="11" y="11.5" width="13" height="10" fill="#fdf4d0" stroke="#333" stroke-width="0.9"/><rect x="22" y="7.5" width="6.5" height="6.5" fill="#777" stroke="#333" stroke-width="0.8"/></g><g transform="translate(36,737)"><rect x="0.5" y="0.5" width="34.5" height="34" fill="url(#lbtn)" stroke="#8e8e8e" stroke-width="1"/><rect x="6.5" y="19.5" width="6.5" height="6.5" fill="#777" stroke="#333" stroke-width="0.8"/><rect x="11" y="11.5" width="13" height="10" fill="#fdf4d0" stroke="#333" stroke-width="0.9"/><rect x="22" y="7.5" width="6.5" height="6.5" fill="#777" stroke="#333" stroke-width="0.8"/></g><g transform="translate(1,780)"><rect x="0.5" y="0.5" width="34.5" height="34" fill="url(#lbtn)" stroke="#8e8e8e" stroke-width="1"/><rect x="7" y="6.5" width="19" height="7" rx="2.5" fill="#f8c800" stroke="#333" stroke-width="0.9"/><path d="M26,10 H29 V16 H18 V20" fill="none" stroke="#555" stroke-width="1"/></g></svg></div>
<div id="tabbar" class="a"><svg width="30" height="23" viewBox="85 108 30 23" style="position:absolute;left:13px;top:0"><circle cx="102.2" cy="118.8" r="5.6" fill="#fafafa" stroke="#2c3c8c" stroke-width="2.3"/><path d="M99,117 L105,120 M101,115 V122" stroke="#bbb" stroke-width="0.6"/><line x1="102.5" y1="119" x2="107.5" y2="124" stroke="#f4a010" stroke-width="2.2"/><circle cx="108" cy="124.5" r="1.3" fill="#e05050"/></svg><span id="title">* move_copy.dxf</span></div>
<div id="hruler" class="a"><svg width="1083" height="24" viewBox="72 131 1083 24" style="position:absolute;left:0;top:0"><line x1="115.5" y1="148" x2="115.5" y2="155" stroke="#7a7a7a" stroke-width="1"/><line x1="155.5" y1="148" x2="155.5" y2="155" stroke="#7a7a7a" stroke-width="1"/><line x1="195.5" y1="148" x2="195.5" y2="155" stroke="#7a7a7a" stroke-width="1"/><line x1="235.5" y1="148" x2="235.5" y2="155" stroke="#7a7a7a" stroke-width="1"/><line x1="275.5" y1="148" x2="275.5" y2="155" stroke="#7a7a7a" stroke-width="1"/><line x1="315.5" y1="148" x2="315.5" y2="155" stroke="#7a7a7a" stroke-width="1"/><line x1="355.5" y1="148" x2="355.5" y2="155" stroke="#7a7a7a" stroke-width="1"/><line x1="395.5" y1="148" x2="395.5" y2="155" stroke="#7a7a7a" stroke-width="1"/><line x1="435.5" y1="148" x2="435.5" y2="155" stroke="#7a7a7a" stroke-width="1"/><line x1="475.5" y1="148" x2="475.5" y2="155" stroke="#7a7a7a" stroke-width="1"/><line x1="515.5" y1="148" x2="515.5" y2="155" stroke="#7a7a7a" stroke-width="1"/><line x1="555.5" y1="148" x2="555.5" y2="155" stroke="#7a7a7a" stroke-width="1"/><line x1="595.5" y1="148" x2="595.5" y2="155" stroke="#7a7a7a" stroke-width="1"/><line x1="635.5" y1="148" x2="635.5" y2="155" stroke="#7a7a7a" stroke-width="1"/><line x1="675.5" y1="148" x2="675.5" y2="155" stroke="#7a7a7a" stroke-width="1"/><line x1="715.5" y1="148" x2="715.5" y2="155" stroke="#7a7a7a" stroke-width="1"/><line x1="755.5" y1="148" x2="755.5" y2="155" stroke="#7a7a7a" stroke-width="1"/><line x1="795.5" y1="148" x2="795.5" y2="155" stroke="#7a7a7a" stroke-width="1"/><line x1="835.5" y1="148" x2="835.5" y2="155" stroke="#7a7a7a" stroke-width="1"/><line x1="875.5" y1="148" x2="875.5" y2="155" stroke="#7a7a7a" stroke-width="1"/><line x1="915.5" y1="148" x2="915.5" y2="155" stroke="#7a7a7a" stroke-width="1"/><line x1="955.5" y1="148" x2="955.5" y2="155" stroke="#7a7a7a" stroke-width="1"/><line x1="995.5" y1="148" x2="995.5" y2="155" stroke="#7a7a7a" stroke-width="1"/><line x1="1035.5" y1="148" x2="1035.5" y2="155" stroke="#7a7a7a" stroke-width="1"/><line x1="1075.5" y1="148" x2="1075.5" y2="155" stroke="#7a7a7a" stroke-width="1"/><line x1="1115.5" y1="148" x2="1115.5" y2="155" stroke="#7a7a7a" stroke-width="1"/><path d="M1010,145 h10 l-5,6 z" fill="#000"/></svg><span class="rl" style="left:23.5px">-20</span><span class="rl" style="left:63.5px">-10</span><span class="rl" style="left:103.5px">0</span><span class="rl" style="left:143.5px">10</span><span class="rl" style="left:183.5px">20</span><span class="rl" style="left:223.5px">30</span><span class="rl" style="left:263.5px">40</span><span class="rl" style="left:303.5px">50</span><span class="rl" style="left:343.5px">60</span><span class="rl" style="left:383.5px">70</span><span class="rl" style="left:423.5px">80</span><span class="rl" style="left:463.5px">90</span><span class="rl" style="left:503.5px">100</span><span class="rl" style="left:543.5px">110</span><span class="rl" style="left:583.5px">120</span><span class="rl" style="left:623.5px">130</span><span class="rl" style="left:663.5px">140</span><span class="rl" style="left:703.5px">150</span><span class="rl" style="left:743.5px">160</span><span class="rl" style="left:783.5px">170</span><span class="rl" style="left:823.5px">180</span><span class="rl" style="left:863.5px">190</span><span class="rl" style="left:903.5px">200</span><span class="rl" style="left:943.5px">210</span><span class="rl" style="left:983.5px">220</span><span class="rl" style="left:1023.5px">230</span></div>
<div id="vruler" class="a"><svg width="23" height="593" viewBox="72 155 23 593" style="position:absolute;left:0;top:0"><line x1="88" y1="712.4" x2="95" y2="712.4" stroke="#7a7a7a" stroke-width="1"/><line x1="88" y1="672.4" x2="95" y2="672.4" stroke="#7a7a7a" stroke-width="1"/><line x1="88" y1="632.4" x2="95" y2="632.4" stroke="#7a7a7a" stroke-width="1"/><line x1="88" y1="592.4" x2="95" y2="592.4" stroke="#7a7a7a" stroke-width="1"/><line x1="88" y1="552.4" x2="95" y2="552.4" stroke="#7a7a7a" stroke-width="1"/><line x1="88" y1="512.4" x2="95" y2="512.4" stroke="#7a7a7a" stroke-width="1"/><line x1="88" y1="472.4" x2="95" y2="472.4" stroke="#7a7a7a" stroke-width="1"/><line x1="88" y1="432.4" x2="95" y2="432.4" stroke="#7a7a7a" stroke-width="1"/><line x1="88" y1="392.4" x2="95" y2="392.4" stroke="#7a7a7a" stroke-width="1"/><line x1="88" y1="352.4" x2="95" y2="352.4" stroke="#7a7a7a" stroke-width="1"/><line x1="88" y1="312.4" x2="95" y2="312.4" stroke="#7a7a7a" stroke-width="1"/><line x1="88" y1="272.4" x2="95" y2="272.4" stroke="#7a7a7a" stroke-width="1"/><line x1="88" y1="232.4" x2="95" y2="232.4" stroke="#7a7a7a" stroke-width="1"/><line x1="88" y1="192.4" x2="95" y2="192.4" stroke="#7a7a7a" stroke-width="1"/><path d="M84,652 v10 l6,-5 z" fill="#000"/></svg><span class="vl" style="top:557.4px">-20</span><span class="vl" style="top:517.4px">-10</span><span class="vl" style="top:477.4px">0</span><span class="vl" style="top:437.4px">10</span><span class="vl" style="top:397.4px">20</span><span class="vl" style="top:357.4px">30</span><span class="vl" style="top:317.4px">40</span><span class="vl" style="top:277.4px">50</span><span class="vl" style="top:237.4px">60</span><span class="vl" style="top:197.4px">70</span><span class="vl" style="top:157.4px">80</span><span class="vl" style="top:117.4px">90</span><span class="vl" style="top:77.4px">100</span><span class="vl" style="top:37.4px">110</span><span class="vl" style="top:-2.6px">120</span></div>
<div id="canvas" class="a"><svg width="1043" height="577" viewBox="95 155 1043 577" style="position:absolute;left:0;top:0"><defs><pattern id="gd" x="115" y="152" width="40" height="40" patternUnits="userSpaceOnUse"><rect x="0" y="0" width="1" height="1" fill="#404040"/></pattern></defs><g stroke="#131313" stroke-width="1.7"><line x1="95" y1="232.3" x2="1138" y2="232.3"/><line x1="95" y1="632.3" x2="1138" y2="632.3"/><line x1="195.2" y1="155" x2="195.2" y2="732"/><line x1="595.2" y1="155" x2="595.2" y2="732"/><line x1="995.2" y1="155" x2="995.2" y2="732"/></g><rect x="95" y="155" width="1043" height="577" fill="url(#gd)"/><g stroke="#5c0000" stroke-width="1.2"><line x1="175" y1="632.3" x2="195.5" y2="632.3"/><line x1="195.3" y1="632.3" x2="195.3" y2="652"/></g><defs><g id="cp"><g fill="none" stroke="#5e2a2a" stroke-width="1"><path d="M195.5,632.3 V520 H270.5 L378,586 V632.3 Z"/><path d="M199.5,627.5 V524.5 H269 L374,589.5 V627.5 Z"/><circle cx="259.1" cy="556" r="12" stroke="#7a3434"/><circle cx="323" cy="595.6" r="12" stroke="#7a3434"/></g><rect x="206" y="510.8" width="10" height="10" fill="#0000b0" stroke="#4c4cc8" stroke-width="0.8"/><rect x="206" y="519.5" width="10" height="10" fill="#0000b0" stroke="#4c4cc8" stroke-width="0.8"/><rect x="194.8" y="519.5" width="10" height="10" fill="#0b88b0" stroke="#5ab4cf" stroke-width="0.8"/><rect x="198.2" y="523" width="10" height="10" fill="#0b88b0" stroke="#5ab4cf" stroke-width="0.8"/><rect x="185.9" y="531" width="10" height="10" fill="#c0001c" stroke="#d86070" stroke-width="0.8"/><rect x="194.7" y="531" width="10" height="10" fill="#0000b0" stroke="#4c4cc8" stroke-width="0.8"/><rect x="210" y="531" width="10" height="10" fill="#0b88b0" stroke="#5ab4cf" stroke-width="0.8"/><rect x="206" y="535" width="10" height="10" fill="#0b88b0" stroke="#5ab4cf" stroke-width="0.8"/><rect x="226" y="531" width="10" height="10" fill="#0000b0" stroke="#4c4cc8" stroke-width="0.8"/><rect x="233.7" y="519.6" width="10" height="10" fill="#0b88b0" stroke="#5ab4cf" stroke-width="0.8"/><rect x="206" y="551" width="10" height="10" fill="#c0001c" stroke="#d86070" stroke-width="0.8"/><rect x="194.8" y="571.1" width="10" height="10" fill="#0b88b0" stroke="#5ab4cf" stroke-width="0.8"/><rect x="269.9" y="517" width="10" height="10" fill="#c0001c" stroke="#d86070" stroke-width="0.8"/><rect x="261.3" y="514.9" width="10" height="10" fill="#0040b8" stroke="#5a80d0" stroke-width="0.8"/><rect x="265.7" y="515.4" width="10" height="10" fill="#0b88b0" stroke="#5ab4cf" stroke-width="0.8"/><rect x="261.3" y="519.4" width="10" height="10" fill="#0000b0" stroke="#4c4cc8" stroke-width="0.8"/><rect x="267" y="521" width="10" height="10" fill="#0000b0" stroke="#4c4cc8" stroke-width="0.8"/><rect x="264.3" y="519.9" width="10" height="10" fill="#0b88b0" stroke="#5ab4cf" stroke-width="0.8"/><rect x="253.6" y="529.8" width="10" height="10" fill="#0000b0" stroke="#4c4cc8" stroke-width="0.8"/><circle cx="266.1" cy="535.6" r="4.8" fill="#0000b0" stroke="#4c4cc8" stroke-width="0.8"/><rect x="254" y="539" width="10" height="10" fill="#0b88b0" stroke="#5ab4cf" stroke-width="0.8"/><rect x="233.2" y="551" width="10" height="10" fill="#c0001c" stroke="#d86070" stroke-width="0.8"/><rect x="242.2" y="551" width="10" height="10" fill="#0b88b0" stroke="#5ab4cf" stroke-width="0.8"/><circle cx="259.1" cy="556" r="4.8" fill="#0000b0" stroke="#4c4cc8" stroke-width="0.8"/><rect x="265.7" y="551" width="10" height="10" fill="#0b88b0" stroke="#5ab4cf" stroke-width="0.8"/><rect x="274.7" y="551" width="10" height="10" fill="#0000b0" stroke="#4c4cc8" stroke-width="0.8"/><rect x="254" y="562.6" width="10" height="10" fill="#0b88b0" stroke="#5ab4cf" stroke-width="0.8"/><rect x="254" y="571.8" width="10" height="10" fill="#c0001c" stroke="#d86070" stroke-width="0.8"/><rect x="319.5" y="554.2" width="10" height="10" fill="#0b88b0" stroke="#5ab4cf" stroke-width="0.8"/><rect x="318" y="570.2" width="10" height="10" fill="#0000b0" stroke="#4c4cc8" stroke-width="0.8"/><rect x="318" y="578.5" width="10" height="10" fill="#0b88b0" stroke="#5ab4cf" stroke-width="0.8"/><rect x="297.2" y="590.9" width="10" height="10" fill="#c0001c" stroke="#d86070" stroke-width="0.8"/><rect x="306.3" y="590.9" width="10" height="10" fill="#0b88b0" stroke="#5ab4cf" stroke-width="0.8"/><circle cx="323" cy="595.6" r="4.8" fill="#0000b0" stroke="#4c4cc8" stroke-width="0.8"/><rect x="329.8" y="590.9" width="10" height="10" fill="#0b88b0" stroke="#5ab4cf" stroke-width="0.8"/><rect x="338.7" y="590.9" width="10" height="10" fill="#0000b0" stroke="#4c4cc8" stroke-width="0.8"/><rect x="318" y="602.8" width="10" height="10" fill="#0b88b0" stroke="#5ab4cf" stroke-width="0.8"/><rect x="318" y="611.9" width="10" height="10" fill="#c0001c" stroke="#d86070" stroke-width="0.8"/><rect x="206" y="591" width="10" height="10" fill="#0000b0" stroke="#4c4cc8" stroke-width="0.8"/><rect x="185.5" y="611" width="10" height="10" fill="#c0001c" stroke="#d86070" stroke-width="0.8"/><rect x="194.8" y="611" width="10" height="10" fill="#0000b0" stroke="#4c4cc8" stroke-width="0.8"/><rect x="206" y="607" width="10" height="10" fill="#0b88b0" stroke="#5ab4cf" stroke-width="0.8"/><rect x="209.8" y="611" width="10" height="10" fill="#0b88b0" stroke="#5ab4cf" stroke-width="0.8"/><rect x="198" y="618.6" width="10" height="10" fill="#0b88b0" stroke="#5ab4cf" stroke-width="0.8"/><rect x="194.8" y="622.1" width="10" height="10" fill="#0b88b0" stroke="#5ab4cf" stroke-width="0.8"/><rect x="206" y="622.3" width="10" height="10" fill="#0000b0" stroke="#4c4cc8" stroke-width="0.8"/><rect x="206" y="631.6" width="10" height="10" fill="#c0001c" stroke="#d86070" stroke-width="0.8"/><rect x="226" y="611" width="10" height="10" fill="#0000b0" stroke="#4c4cc8" stroke-width="0.8"/><rect x="286" y="622.2" width="10" height="10" fill="#0b88b0" stroke="#5ab4cf" stroke-width="0.8"/><rect x="346" y="611" width="10" height="10" fill="#c0001c" stroke="#d86070" stroke-width="0.8"/><rect x="366.3" y="590.9" width="10" height="10" fill="#0000b0" stroke="#4c4cc8" stroke-width="0.8"/><rect x="381.1" y="587.5" width="10" height="10" fill="#0b88b0" stroke="#5ab4cf" stroke-width="0.8"/><rect x="376" y="591" width="10" height="10" fill="#0b88b0" stroke="#5ab4cf" stroke-width="0.8"/><rect x="374.5" y="583" width="10" height="10" fill="#c0001c" stroke="#d86070" stroke-width="0.8"/><rect x="371.8" y="587" width="10" height="10" fill="#c0001c" stroke="#d86070" stroke-width="0.8"/><circle cx="370.8" cy="601.3" r="4.8" fill="#0000b0" stroke="#4c4cc8" stroke-width="0.8"/><rect x="384.5" y="596.3" width="10" height="10" fill="#0000b0" stroke="#4c4cc8" stroke-width="0.8"/><rect x="377" y="596" width="10" height="10" fill="#0000b0" stroke="#4c4cc8" stroke-width="0.8"/><rect x="377.1" y="603.2" width="10" height="10" fill="#0b88b0" stroke="#5ab4cf" stroke-width="0.8"/><rect x="387" y="611" width="10" height="10" fill="#0000b0" stroke="#4c4cc8" stroke-width="0.8"/><rect x="377.5" y="612" width="10" height="10" fill="#0000b0" stroke="#4c4cc8" stroke-width="0.8"/><rect x="366.2" y="607.2" width="10" height="10" fill="#0b88b0" stroke="#5ab4cf" stroke-width="0.8"/><rect x="361.8" y="611" width="10" height="10" fill="#0b88b0" stroke="#5ab4cf" stroke-width="0.8"/><rect x="365.8" y="613.9" width="10" height="10" fill="#0b88b0" stroke="#5ab4cf" stroke-width="0.8"/><rect x="366.2" y="622.3" width="10" height="10" fill="#0000b0" stroke="#4c4cc8" stroke-width="0.8"/><rect x="374" y="618.8" width="10" height="10" fill="#0b88b0" stroke="#5ab4cf" stroke-width="0.8"/><rect x="377.3" y="622.3" width="10" height="10" fill="#0b88b0" stroke="#5ab4cf" stroke-width="0.8"/><rect x="366.2" y="631.7" width="10" height="10" fill="#c0001c" stroke="#d86070" stroke-width="0.8"/></g></defs><use href="#cp" x="0" y="0"/><use href="#cp" x="200" y="0"/><use href="#cp" x="400" y="0"/><use href="#cp" x="600" y="0"/><g fill="none" stroke="#a01010" stroke-width="1"><circle cx="474.5" cy="592" r="4.5"/><line x1="469" y1="592" x2="480" y2="592"/><line x1="474.5" y1="586.5" x2="474.5" y2="597.5"/></g><defs><radialGradient id="ringg" gradientUnits="userSpaceOnUse" cx="1015.1" cy="656.2" r="40"><stop offset="0.72" stop-color="#000" stop-opacity="0"/><stop offset="0.8" stop-color="#1c252e"/><stop offset="0.9" stop-color="#46525e"/><stop offset="0.95" stop-color="#6a7886"/><stop offset="0.985" stop-color="#56626e"/><stop offset="1" stop-color="#000" stop-opacity="0"/></radialGradient></defs><circle cx="1015.1" cy="656.2" r="40" fill="url(#ringg)"/><path d="M0,0 L0,16 L4,12.5 L7,19 L9.5,18 L6.5,11.5 L11.5,11.5 Z" transform="translate(1014.5,655) scale(1.45)" fill="none" stroke="#fff" stroke-width="2.2" stroke-linejoin="round"/><path d="M0,0 L0,16 L4,12.5 L7,19 L9.5,18 L6.5,11.5 L11.5,11.5 Z" transform="translate(1014.5,655) scale(1.45)" fill="#fff" stroke="#000" stroke-width="0.6896551724137931" stroke-linejoin="round"/></svg></div>
<div id="vscroll" class="a"><div id="vthumb" class="a"></div></div>
<div id="hscroll" class="a"><div id="hthumb" class="a"></div></div>
<div id="zoomlbl" class="a">10 &lt; 100</div>
<div id="corner" class="a"></div>
<div id="hist" class="a"><span>Comando: </span>move</div>
<div id="cmdrow" class="a"><span id="cmdlbl">Comando:</span><div id="cmdin" class="a"></div><div id="cmdbtn" class="a"><svg width="25" height="25" style="position:absolute;left:0;top:0"><rect x="5.5" y="8" width="13" height="9" fill="#f0f0f0" stroke="#222" stroke-width="1"/><rect x="5" y="7.5" width="14" height="2.5" fill="#111"/><rect x="16" y="8" width="1" height="1" fill="#fff"/></svg></div></div>
<div id="statusbg" class="a"></div><div id="status" class="a"><svg width="1500" height="46" viewBox="0 798 1500 46" style="position:absolute;left:0;top:798px"><circle cx="509.5" cy="821.7" r="2.8" fill="#c6c6c6"/><circle cx="943" cy="821.7" r="2.8" fill="#c6c6c6"/><circle cx="1272.5" cy="821.7" r="2.8" fill="#c6c6c6"/><rect x="717.5" y="806.5" width="17" height="29" rx="8.5" fill="#fff" stroke="#333" stroke-width="0.9"/><path d="M717.5,819.5 Q726,817 734.5,819.5" fill="none" stroke="#333" stroke-width="0.9"/><line x1="726" y1="806.5" x2="726" y2="818" stroke="#333" stroke-width="0.8"/><rect x="724.5" y="809" width="3" height="6" rx="1.5" fill="#fff" stroke="#333" stroke-width="0.8"/></svg><span class="st" style="left:2px;top:807px">205,-6</span><span class="st" style="left:2px;top:826px">@135,-16</span><div class="a" style="left:253px;top:804px;width:1px;height:38px;background:#8a8a8a"></div><span class="st" style="left:256px;top:807px">205.0878&lt;358°</span><span class="st" style="left:256px;top:826px">@135.9448&lt;353°</span><span class="st2" style="right:801px;top:811px">Seleccionar entidad o región</span><span class="st2" style="right:801px;top:822px">Mover entidad o referencia</span><span class="st2" style="left:949px;top:811px">Las entidades seleccionadas:</span><span class="st2" style="left:949px;top:822px">104 entidades en 3 capas.</span></div>
<div id="layers" class="a"><svg width="300" height="690" viewBox="1155 108 300 690" style="position:absolute;left:-2px;top:0"><defs><linearGradient id="ttl" x1="0" y1="0" x2="0" y2="1"><stop offset="0" stop-color="#ececec"/><stop offset="1" stop-color="#dcdcdc"/></linearGradient><linearGradient id="lb" x1="0" y1="0" x2="0" y2="1"><stop offset="0" stop-color="#f6f6f6"/><stop offset="1" stop-color="#e6e6e6"/></linearGradient></defs><rect x="1155" y="108" width="300" height="22" fill="url(#ttl)"/><rect x="1155" y="108" width="300" height="690" fill="none" stroke="#c6c6c6" stroke-width="1"/><circle cx="1164" cy="118" r="7" fill="#6e6e6e"/><circle cx="1182" cy="118" r="7" fill="#6e6e6e"/><path d="M1161,115 L1167,121 M1167,115 L1161,121" stroke="#fff" stroke-width="1.8"/><rect x="1178.5" y="116.5" width="5" height="4.5" fill="none" stroke="#fff" stroke-width="1"/><path d="M1180.5,116.5 V114.5 H1185.5 V119 H1183.5" fill="none" stroke="#fff" stroke-width="1"/><text x="1322" y="123" font-family="Liberation Sans" font-size="12" fill="#2a2a2a" text-anchor="middle">Lista de capas</text><rect x="1155.5" y="130.5" width="60.0" height="25" fill="url(#lb)" stroke="#a0a0a0" stroke-width="1"/><rect x="1215.5" y="130.5" width="60.0" height="25" fill="url(#lb)" stroke="#a0a0a0" stroke-width="1"/><rect x="1275.5" y="130.5" width="60.0" height="25" fill="url(#lb)" stroke="#a0a0a0" stroke-width="1"/><rect x="1335.5" y="130.5" width="60.0" height="25" fill="url(#lb)" stroke="#a0a0a0" stroke-width="1"/><rect x="1395.5" y="130.5" width="59.0" height="25" fill="url(#lb)" stroke="#a0a0a0" stroke-width="1"/><g transform="translate(1185,142.5) scale(1.0)"><path d="M-7.8,0.3 Q-4,-5.8 0.5,-5.6 Q5,-5.4 7.8,-0.1 Q4.5,5.8 0,5.8 Q-5,5.8 -7.8,0.3 Z" fill="#000"/><ellipse cx="0" cy="0.5" rx="4.8" ry="3.5" fill="#fff"/><circle cx="0" cy="-0.5" r="3" fill="#000"/><circle cx="-0.6" cy="-1.3" r="0.8" fill="#fff"/></g><g transform="translate(1245,142.5) scale(1.0)"><path d="M-7.8,0.3 Q-4,-5.8 0.5,-5.6 Q5,-5.4 7.8,-0.1 Q4.5,5.8 0,5.8 Q-5,5.8 -7.8,0.3 Z" fill="#a8a8a8"/><ellipse cx="0" cy="0.5" rx="4.8" ry="3.5" fill="#fff"/><circle cx="0" cy="-0.5" r="3" fill="#a8a8a8"/><circle cx="-0.6" cy="-1.3" r="0.8" fill="#fff"/></g><path d="M1305,137 V148 M1299.5,142.5 H1310.5" stroke="#f00000" stroke-width="2.6"/><path d="M1358,142.5 H1371" stroke="#f00000" stroke-width="2.6"/><g transform="translate(1418,150) scale(0.75)"><path d="M0,0 L1.5,-4.5 L13,-16 L16,-13 L4.5,-1.5 Z" fill="#f0b030" stroke="#8a5a10" stroke-width="0.7"/><path d="M13,-16 L14.5,-17.5 Q15.5,-18.5 16.5,-17.5 L17.5,-16.5 Q18.5,-15.5 17.5,-14.5 L16,-13 Z" fill="#e03030" stroke="#902020" stroke-width="0.5"/><path d="M0,0 L1.5,-4.5 L4.5,-1.5 Z" fill="#f4dcb0"/></g><rect x="1156" y="156" width="298" height="642" fill="#fff"/><rect x="1161.5" y="162.5" width="15" height="8" fill="#fff" stroke="#000" stroke-width="1"/><text x="1183" y="172" font-family="Liberation Sans" font-size="13.5" fill="#000">0</text><g transform="translate(1423,166.5) scale(0.95)"><path d="M-7.8,0.3 Q-4,-5.8 0.5,-5.6 Q5,-5.4 7.8,-0.1 Q4.5,5.8 0,5.8 Q-5,5.8 -7.8,0.3 Z" fill="#000"/><ellipse cx="0" cy="0.5" rx="4.8" ry="3.5" fill="#fff"/><circle cx="0" cy="-0.5" r="3" fill="#000"/><circle cx="-0.6" cy="-1.3" r="0.8" fill="#fff"/></g><g transform="translate(1445,167)"><path d="M-3.8,0 V-3 Q-3.8,-7.2 0,-7.2 Q3.8,-7.2 3.8,-3 V0" fill="none" stroke="#bdbdbd" stroke-width="1.5"/><rect x="-5" y="-0.2" width="10" height="7" fill="#bdbdbd"/></g><rect x="1161.5" y="182.5" width="15" height="8" fill="#f00000" stroke="#000" stroke-width="1"/><text x="1183" y="192" font-family="Liberation Sans" font-size="13.5" fill="#000">Centro</text><g transform="translate(1423,186.5) scale(0.95)"><path d="M-7.8,0.3 Q-4,-5.8 0.5,-5.6 Q5,-5.4 7.8,-0.1 Q4.5,5.8 0,5.8 Q-5,5.8 -7.8,0.3 Z" fill="#000"/><ellipse cx="0" cy="0.5" rx="4.8" ry="3.5" fill="#fff"/><circle cx="0" cy="-0.5" r="3" fill="#000"/><circle cx="-0.6" cy="-1.3" r="0.8" fill="#fff"/></g><g transform="translate(1445,187)"><path d="M-3.8,0 V-3 Q-3.8,-7.2 0,-7.2 Q3.8,-7.2 3.8,-3 V0" fill="none" stroke="#bdbdbd" stroke-width="1.5"/><rect x="-5" y="-0.2" width="10" height="7" fill="#bdbdbd"/></g><rect x="1161.5" y="202.5" width="15" height="8" fill="#000" stroke="#000" stroke-width="1"/><text x="1183" y="212" font-family="Liberation Sans" font-size="13.5" fill="#000">Delgado</text><g transform="translate(1423,206.5) scale(0.95)"><path d="M-7.8,0.3 Q-4,-5.8 0.5,-5.6 Q5,-5.4 7.8,-0.1 Q4.5,5.8 0,5.8 Q-5,5.8 -7.8,0.3 Z" fill="#000"/><ellipse cx="0" cy="0.5" rx="4.8" ry="3.5" fill="#fff"/><circle cx="0" cy="-0.5" r="3" fill="#000"/><circle cx="-0.6" cy="-1.3" r="0.8" fill="#fff"/></g><g transform="translate(1445,207)"><path d="M-3.8,0 V-3 Q-3.8,-7.2 0,-7.2 Q3.8,-7.2 3.8,-3 V0" fill="none" stroke="#bdbdbd" stroke-width="1.5"/><rect x="-5" y="-0.2" width="10" height="7" fill="#bdbdbd"/></g><rect x="1161.5" y="222.5" width="15" height="8" fill="#000" stroke="#000" stroke-width="1"/><text x="1183" y="232" font-family="Liberation Sans" font-size="13.5" fill="#000">Visible</text><g transform="translate(1423,226.5) scale(0.95)"><path d="M-7.8,0.3 Q-4,-5.8 0.5,-5.6 Q5,-5.4 7.8,-0.1 Q4.5,5.8 0,5.8 Q-5,5.8 -7.8,0.3 Z" fill="#000"/><ellipse cx="0" cy="0.5" rx="4.8" ry="3.5" fill="#fff"/><circle cx="0" cy="-0.5" r="3" fill="#000"/><circle cx="-0.6" cy="-1.3" r="0.8" fill="#fff"/></g><g transform="translate(1445,227)"><path d="M-3.8,0 V-3 Q-3.8,-7.2 0,-7.2 Q3.8,-7.2 3.8,-3 V0" fill="none" stroke="#bdbdbd" stroke-width="1.5"/><rect x="-5" y="-0.2" width="10" height="7" fill="#bdbdbd"/></g><g transform="translate(1394.5,233) scale(0.72)"><path d="M0,0 L1.5,-4.5 L13,-16 L16,-13 L4.5,-1.5 Z" fill="#f0b030" stroke="#8a5a10" stroke-width="0.7"/><path d="M13,-16 L14.5,-17.5 Q15.5,-18.5 16.5,-17.5 L17.5,-16.5 Q18.5,-15.5 17.5,-14.5 L16,-13 Z" fill="#e03030" stroke="#902020" stroke-width="0.5"/><path d="M0,0 L1.5,-4.5 L4.5,-1.5 Z" fill="#f4dcb0"/></g></svg></div>
<div id="dock" class="a"><svg width="45" height="690" viewBox="1455 108 45 690" style="position:absolute;left:-1px;top:0"><rect x="1463" y="115" width="1.5" height="1.5" fill="#aaa"/><rect x="1468" y="115" width="1.5" height="1.5" fill="#aaa"/><rect x="1473" y="115" width="1.5" height="1.5" fill="#aaa"/><rect x="1478" y="115" width="1.5" height="1.5" fill="#aaa"/><rect x="1483" y="115" width="1.5" height="1.5" fill="#aaa"/><rect x="1488" y="115" width="1.5" height="1.5" fill="#aaa"/><rect x="1456" y="120" width="42" height="43" rx="5" fill="#b8b8b8"/><rect x="1463.5" y="127.5" width="28" height="27" fill="#fff" stroke="#000" stroke-width="1"/><rect x="1463.5" y="127.5" width="28" height="4" fill="#000"/><rect x="1464.5" y="128" width="2.5" height="2.5" fill="#fff"/><g transform="translate(1463,127)"><path d="M8,13 L14,10 V21 L8,24 Z" fill="#aaa" stroke="#555" stroke-width="0.7"/><path d="M11,11.5 L18,8.5 V19.5 L11,22.5 Z" fill="#ddd" stroke="#555" stroke-width="0.7"/><path d="M14,10 L21,7 V18 L14,21 Z" fill="#fff" stroke="#555" stroke-width="0.7"/><path d="M16,18 L19,11 L19.5,17" fill="none" stroke="#e04040" stroke-width="0.8"/></g><rect x="1463.5" y="174.5" width="28" height="27" fill="#fff" stroke="#000" stroke-width="1"/><rect x="1463.5" y="174.5" width="28" height="4" fill="#000"/><rect x="1464.5" y="175" width="2.5" height="2.5" fill="#fff"/><g transform="translate(1463,174)"><rect x="7.5" y="10.5" width="11" height="9" fill="#f4ecc0" stroke="#555" stroke-width="0.8"/><circle cx="17" cy="19" r="5" fill="#f4ecc0" fill-opacity="0.7" stroke="#555" stroke-width="0.8"/></g><rect x="1463.5" y="220.5" width="28" height="27" fill="#fff" stroke="#000" stroke-width="1"/><rect x="1463.5" y="220.5" width="28" height="4" fill="#000"/><rect x="1464.5" y="221" width="2.5" height="2.5" fill="#fff"/><g transform="translate(1463,220)"><rect x="5.5" y="10.5" width="18" height="12" rx="2" fill="#f8f8f4" stroke="#b8c8e0" stroke-width="0.9"/></g><line x1="1457" y1="261.5" x2="1500" y2="261.5" stroke="#888" stroke-dasharray="1 2"/><rect x="1463.5" y="276.5" width="28" height="27" fill="#fff" stroke="#000" stroke-width="1"/><rect x="1463.5" y="276.5" width="28" height="4" fill="#000"/><rect x="1464.5" y="277" width="2.5" height="2.5" fill="#fff"/><g transform="translate(1463,276)"><g fill="#000"><rect x="4" y="8" width="4" height="3"/><rect x="4" y="14" width="4" height="3"/><rect x="4" y="20" width="4" height="3"/></g><g fill="none" stroke="#333" stroke-width="0.8"><rect x="10.5" y="8.5" width="14" height="3"/><rect x="10.5" y="14.5" width="14" height="3"/><rect x="10.5" y="20.5" width="14" height="3"/></g></g><rect x="1463.5" y="322.5" width="28" height="27" fill="#fff" stroke="#000" stroke-width="1"/><rect x="1463.5" y="322.5" width="28" height="4" fill="#000"/><rect x="1464.5" y="323" width="2.5" height="2.5" fill="#fff"/><g transform="translate(1463,322)"><path d="M6,9 H22 L16,16 V24 L12,26 V16 Z" fill="#bbb" stroke="#444" stroke-width="0.8"/></g><rect x="1463.5" y="368.5" width="28" height="27" fill="#fff" stroke="#000" stroke-width="1"/><rect x="1463.5" y="368.5" width="28" height="4" fill="#000"/><rect x="1464.5" y="369" width="2.5" height="2.5" fill="#fff"/><g transform="translate(1463,368)"><path d="M7,11 L12,14 V20 L7,23 Z" fill="#fff" stroke="#444" stroke-width="0.8"/><rect x="12" y="13" width="9" height="8" rx="1" fill="#999" stroke="#444" stroke-width="0.7"/><line x1="3" y1="17" x2="26" y2="17" stroke="#e06060" stroke-width="0.6" stroke-dasharray="1 1"/></g><line x1="1457" y1="411.5" x2="1500" y2="411.5" stroke="#888" stroke-dasharray="1 2"/><rect x="1456" y="417" width="42" height="43" rx="5" fill="#b8b8b8"/><rect x="1463.5" y="424.5" width="28" height="27" fill="#fff" stroke="#000" stroke-width="1"/><rect x="1463.5" y="424.5" width="28" height="4" fill="#000"/><rect x="1464.5" y="425" width="2.5" height="2.5" fill="#fff"/><g transform="translate(1463,424)"><g fill="#888"><rect x="4" y="8" width="13" height="1"/><rect x="4" y="11" width="13" height="1"/><rect x="4" y="14" width="11" height="1"/><rect x="4" y="17" width="11" height="1"/></g><line x1="1" y1="21.5" x2="28" y2="21.5" stroke="#000" stroke-width="0.7"/><rect x="3" y="23" width="22" height="1.2" fill="#666"/></g><rect x="1463.5" y="472.5" width="28" height="27" fill="#fff" stroke="#000" stroke-width="1"/><rect x="1463.5" y="472.5" width="28" height="4" fill="#000"/><rect x="1464.5" y="473" width="2.5" height="2.5" fill="#fff"/><g transform="translate(1463,472)"><rect x="8.5" y="8.5" width="12" height="15" fill="#f0f0f0" stroke="#8a6a20" stroke-width="1.2"/><rect x="11" y="7" width="7" height="3" fill="#999"/><g stroke="#aaa" stroke-width="0.8"><line x1="10.5" y1="13" x2="18.5" y2="13"/><line x1="10.5" y1="16" x2="18.5" y2="16"/><line x1="10.5" y1="19" x2="16" y2="19"/></g></g></svg></div>
</body></html>
